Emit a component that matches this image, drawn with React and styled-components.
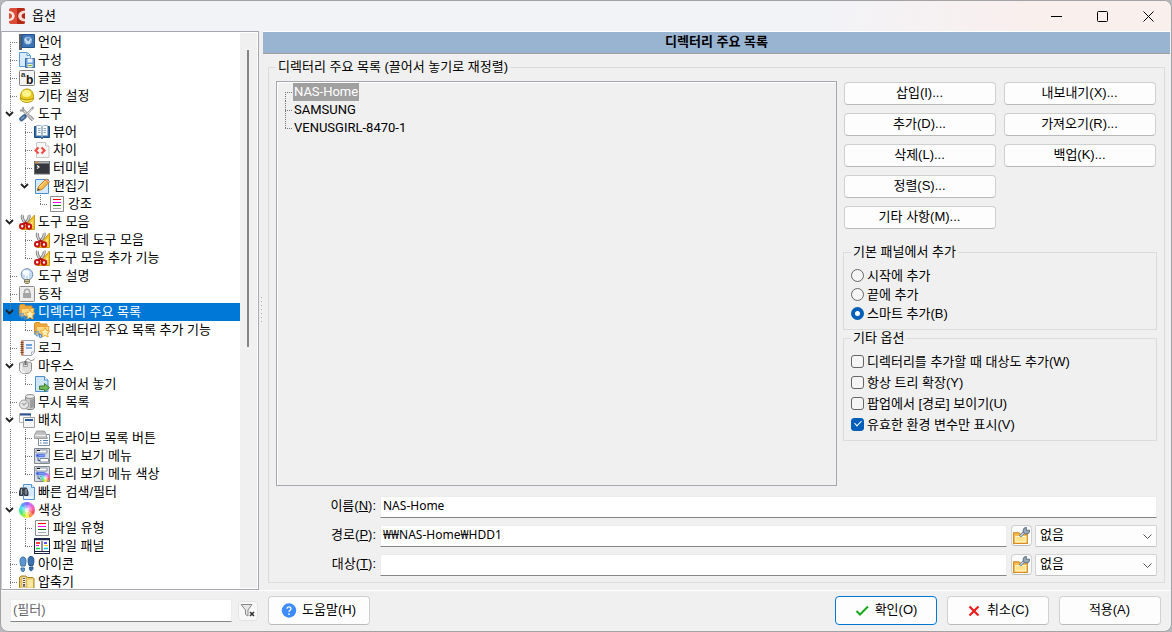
import React, { useState } from "react";
import styled, { createGlobalStyle, css } from "styled-components";

const uiFont = `"Liberation Sans", "Noto Sans CJK KR", sans-serif`;
const inputFont = `"Noto Sans", "Noto Sans CJK KR", sans-serif`;

const GlobalStyle = createGlobalStyle`
  *, *::before, *::after { box-sizing: border-box; }
  body {
    margin: 0;
    background: #b6b8bb;
    color: #000;
    font: 13px/18px ${uiFont};
  }
  button, input, select { font: inherit; color: inherit; margin: 0; }
`;

const Window = styled.div`
  display: flex;
  flex-direction: column;
  height: 100vh;
  background: #f0f0f0;
  border: 1px solid #a3a3a5;
  border-radius: 8px;
  overflow: hidden;
`;

const TitleBar = styled.header`
  display: flex;
  align-items: center;
  height: 30px;
  flex: none;
  padding-left: 8px;
  gap: 7px;
  background: linear-gradient(100deg, #f2f3f7 0 70%, #f9efed 88%);
`;

const Title = styled.h1`
  flex: 1;
  margin: 0;
  font-size: 13px;
  font-weight: 400;
`;

const WindowButtons = styled.div`
  display: flex;
`;

const WindowButton = styled.button`
  display: grid;
  place-items: center;
  width: 46px;
  height: 28px;
  padding: 0;
  border: 0;
  background: transparent;
`;

const Main = styled.div`
  display: flex;
  flex: 1;
  min-height: 0;
`;

const TreePanel = styled.nav`
  display: flex;
  flex: none;
  width: 258px;
  padding: 1px;
  border: 1px solid #a5a7b0;
  border-left-color: #d0d0d4;
  background: #fff;
`;

const Tree = styled.ul`
  flex: 1;
  min-width: 0;
  margin: 0;
  padding: 0;
  list-style: none;
  overflow: hidden;
`;

const ScrollTrack = styled.div`
  width: 17px;
  padding: 17px 8px 17px 7px;
  background: #f0f0f0;
`;

const ScrollThumb = styled.div`
  height: 57%;
  background: #858585;
`;

const TreeRow = styled.li`
  display: flex;
  align-items: center;
  height: 18px;
  white-space: nowrap;
  ${(p) => p.$selected && css`background: #0078d7; color: #fff;`}

  > svg { flex: none; margin: 0 3px 0 1px; }
`;

const dotsDown = "repeating-linear-gradient(to bottom, #777 0 1px, transparent 1px 2px)";
const dotsRight = "repeating-linear-gradient(to right, #777 0 1px, transparent 1px 2px)";

const Guide = styled.span`
  flex: none;
  display: flex;
  align-items: center;
  width: 15px;
  height: 18px;
  background-repeat: no-repeat;
  ${(p) => {
    const len = { full: "18px", half: "10px", none: "0" }[p.$down];
    return css`
      background-image: ${dotsDown}, ${dotsRight};
      background-position: 7px ${p.$first ? "9px" : "0"}, 7px 9px;
      background-size: 1px ${len}, ${p.$branch ? "8px" : "0"} 1px;
    `;
  }}
`;

const Toggle = styled.button`
  display: grid;
  place-items: center;
  width: 13px;
  height: 9px;
  padding: 0;
  border: 0;
  background: transparent;
  color: #222;
`;

const Splitter = styled.div`
  display: flex;
  align-items: center;
  justify-content: center;
  width: 4px;
  flex: none;

  &::after {
    content: "";
    width: 1px;
    height: 28px;
    background: repeating-linear-gradient(to bottom, #b0b0b0 0 1px, transparent 1px 4px);
  }
`;

const Content = styled.main`
  display: flex;
  flex-direction: column;
  flex: 1;
  min-width: 0;
`;

const PageHeading = styled.h2`
  margin: 0 1px 0 0;
  height: 23px;
  flex: none;
  border: solid #fff;
  border-width: 1px 0 0;
  box-shadow: inset 0 -1px #a0a0a0;
  background: #99b4d1;
  font-size: 13px;
  line-height: 20px;
  font-weight: 700;
  text-align: center;
`;

const GroupBox = styled.fieldset`
  min-width: 0;
  margin: 0;
  padding: ${(p) => p.$pad || "6px 7px"};
  border: 1px solid #dcdcdc;
`;

const Legend = styled.legend`
  padding: 0 2px;
  line-height: 16px;
`;

const HotlistGroup = styled(GroupBox)`
  display: flex;
  flex-direction: column;
  flex: 1;
  min-height: 0;
  gap: 10px;
  margin: 5px 6px 7px 5px;
`;

const Upper = styled.div`
  display: flex;
  flex: 1;
  min-height: 0;
  gap: 6px;
`;

const HotList = styled.ul`
  flex: 1;
  margin: 0;
  padding: 1px 1px 1px 2px;
  list-style: none;
  border: 1px solid #a5a7b0;
  box-shadow: inset 1px 1px #fff;
  font-family: Roboto, "Noto Sans CJK KR", sans-serif;
`;

const HotItem = styled.li`
  display: flex;
  height: 18px;
`;

const HotLabel = styled.span`
  padding: 0 1px;
  ${(p) => p.$selected && css`background: #a0a0a0; color: #fff;`}
`;

const HotGuide = styled(Guide)`
  width: 14px;
  background-position: 6px ${(p) => (p.$first ? "9px" : "0")}, 6px 9px;
`;

const Side = styled.div`
  flex: none;
  width: 314px;
`;

const ButtonGrid = styled.div`
  display: grid;
  grid-auto-flow: column;
  grid-template-rows: repeat(5, 23px);
  grid-auto-columns: 1fr;
  gap: 8px;
  padding: 1px 1px 15px;
`;

const Button = styled.button`
  display: flex;
  align-items: center;
  justify-content: center;
  gap: 5px;
  padding: 0 1px 2px 0;
  border: 1px solid ${(p) => (p.$primary ? "#0078d4" : "#d0d0d0")};
  border-bottom-color: ${(p) => (p.$primary ? "#0078d4" : "#bababa")};
  border-radius: 4px;
  background: #fdfdfd;
  line-height: 18px;
`;

const FooterButton = styled(Button)`
  width: 102px;
  height: 29px;
`;

const Choice = styled.label`
  display: flex;
  align-items: center;
  gap: 3px;
  height: ${(p) => (p.$tall ? 21 : 19)}px;
`;

const Radio = styled.input.attrs({ type: "radio" })`
  appearance: none;
  width: 13px;
  height: 13px;
  border: 1px solid #666;
  border-radius: 50%;
  background: #f5f5f5;
  &:checked { border: 4px solid #005fb8; background: #fff; }
`;

const Checkbox = styled.input.attrs({ type: "checkbox" })`
  appearance: none;
  display: grid;
  justify-items: center;
  width: 13px;
  height: 13px;
  border: 1px solid #666;
  border-radius: 3px;
  background: #f5f5f5;
  &:checked { border-color: #005fb8; background: #005fb8; }
  &:checked::before {
    content: "";
    width: 4px;
    height: 7px;
    border: solid #fff;
    border-width: 0 1px 1px 0;
    transform: rotate(45deg);
  }
`;

const Form = styled.div`
  display: grid;
  gap: 7px;
`;

const FormRow = styled.div`
  display: flex;
  height: 22px;
`;

const FieldLabel = styled.label`
  width: 104px;
  flex: none;
  padding-right: 4px;
  text-align: right;
  line-height: 19px;
`;

const TextInput = styled.input.attrs({ type: "text" })`
  flex: 1;
  min-width: 0;
  padding: 0 2px 2px;
  border: 1px solid #ececec;
  border-bottom-color: #868686;
  border-radius: 0;
  background: #fff;
  font: 12px/18px ${inputFont};
  outline: none;
`;

const FilterInput = styled(TextInput)`
  flex: none;
  width: 222px;
  height: 23px;
  font: 13px/18px ${uiFont};
  &::placeholder { color: #666; opacity: 1; }
`;

const IconButton = styled(Button)`
  width: 21px;
  height: 21px;
  margin: 0 3px 0 4px;
  padding: 0;
`;

const FilterButton = styled(Button)`
  width: 20px;
  height: 20px;
  padding: 0;
  border-color: #e4e4e4;
  background: #f8f8f8;
`;

const SelectBox = styled.div`
  display: grid;
  grid-template-columns: 1fr 14px;
  align-items: center;
  width: 122px;
  > select { grid-area: 1 / 1 / 2 / 3; }
  > svg { grid-area: 1 / 2 / 2 / 3; pointer-events: none; z-index: 1; }
`;

const Select = styled.select`
  appearance: none;
  width: 100%;
  height: 22px;
  padding: 0 4px 2px;
  border: 1px solid #d4d4d4;
  border-bottom-color: #c2c2c2;
  border-radius: 2px;
  background: #fdfdfd;
`;

const Footer = styled.footer`
  display: flex;
  align-items: flex-start;
  gap: 10px;
  flex: none;
  padding: 5px 10px 6px 9px;
  border-top: 1px solid #fff;
`;

const FilterArea = styled.div`
  display: flex;
  align-items: center;
  gap: 6px;
  width: 248px;
  height: 29px;
`;

const Spacer = styled.div`
  flex: 1;
`;

const Svg = ({ size = 16, children }) => (
  <svg width={size} height={size} viewBox="0 0 16 16" fill="none" aria-hidden="true">
    {children}
  </svg>
);

const Scissors = () => (
  <Svg>
    <path d="M15.500 1v14.500H3z" fill="#f0c52a" stroke="#c99a12" />
    <path d="M13.500 6v7.500H9z" fill="#fff0a0" />
    <path d="M3.500 1c-1 3 1 6 3 8.500M10 1c1 3-1.500 6-4 8.500" stroke="#777" strokeWidth="3" />
    <path d="M3.500 1c-1 3 1 6 3 8.500M10 1c1 3-1.500 6-4 8.500" stroke="#d6d6d6" strokeWidth="1.400" />
    <path d="M4.500 10.500l2-1.800 2.500 1.800" stroke="#b51010" strokeWidth="2.200" />
    <ellipse cx="3.200" cy="12.200" rx="2.200" ry="2.300" fill="#fff" stroke="#c81414" strokeWidth="2" />
    <ellipse cx="10" cy="12.500" rx="2.200" ry="2.300" fill="#fff" stroke="#c81414" strokeWidth="2" />
  </Svg>
);

const StarFolder = () => (
  <Svg>
    <path d="M.5 1.500l1-1h4l1 1.500H13v9H.5z" fill="#f0a93c" stroke="#d98d24" />
    <path d="M2.500 4.500h12.500l-1 7.500H2z" fill="#ffd983" stroke="#e8a43c" />
    <path d="M11 5.500l1.600 3 3.200.5-2.300 2.300.6 3.700-3.100-1.600-3.100 1.600.6-3.700L6.200 9l3.200-.5z" fill="#fff0b8" stroke="#efa62c" />
    <circle cx="3" cy="11.500" r="2" stroke="#5b96c8" strokeWidth="1.800" strokeDasharray="1.600 .6" />
    <circle cx="6.500" cy="14" r="1.300" stroke="#4f8cc2" strokeWidth="1.200" />
  </Svg>
);

const ColorLines = () => (
  <Svg>
    <path d="M1.500 .5h13v15h-13z" fill="#fff" stroke="#8c8c8c" />
    <path d="M4 3.500h8" stroke="#f00" />
    <path d="M4 6.500h8" stroke="#f0f" />
    <path d="M4 9.500h8" stroke="#008000" />
    <path d="M4 12.500h8" stroke="#aaa" />
  </Svg>
);

const MenuTree = ({ children }) => (
  <Svg>
    <path d="M.5 .5h15v15H.5z" fill="#d9dfe6" stroke="#83888e" />
    <path d="M2 2h11v3H2z" fill="#fff" stroke="#8a94a4" />
    <path d="M3 2.500h3" stroke="#111" />
    <path d="M2 6h9v3H2z" fill="#2449d6" stroke="#9eb2ee" />
    <path d="M4.500 7.500h6" stroke="#7f9bff" />
    <path d="M6 10.500h8.500v3.500H6z" fill="#fff" stroke="#7e8ca0" />
    <path d="M4 9.500v3h2" stroke="#4b5f8c" />
    {children}
  </Svg>
);

const Wheel = ({ cx = 8, cy = 8, r = 8 }) => {
  const colors = ["#f9565e", "#fb9a4c", "#f7ee50", "#8fee4a", "#45e68e", "#4de0e6", "#5c9bfa", "#8f6cf6", "#d765ee", "#f95fb4"];
  const step = (Math.PI * 2) / colors.length;
  return (
    <>
      {colors.map((c, i) => {
        const a = i * step;
        const b = (i + 1.080) * step;
        const p = (t) => `${(cx + r * Math.cos(t)).toFixed(2)} ${(cy + r * Math.sin(t)).toFixed(2)}`;
        return <path key={c} d={`M${cx} ${cy}L${p(a)}A${r} ${r} 0 0 1 ${p(b)}z`} fill={c} />;
      })}
      <circle cx={cx} cy={cy} r={r * 0.6} fill="#fff" opacity=".35" />
      <circle cx={cx} cy={cy} r={r * 0.3} fill="#fff" opacity=".6" />
    </>
  );
};

const ICONS = {
  flag: () => (
    <Svg>
      <path d="M1.500 0v16" stroke="#56616c" strokeWidth="3" />
      <path d="M3 .5h12.500v13H3z" fill="#3a74b4" stroke="#24528c" />
      <circle cx="9" cy="6.500" r="4" fill="#8db2da" />
      <path d="M6 4.500c1 4 4 4.500 6 .5M7 8.500c1.500 1 3 1 4-.5" stroke="#d2e2f2" strokeWidth="1.200" />
      <path d="M8 4.500h2.500l-1 3z" fill="#3f78b6" />
    </Svg>
  ),
  config: () => (
    <Svg>
      <path d="M.5 .5h8l3 3v11H.5z" fill="#d7ebfc" stroke="#5c9bd8" />
      <path d="M8 .5v3h3" fill="#fff" stroke="#5c9bd8" />
      <path d="M6.500 6.500h9v9h-9z" fill="#6f9ed8" stroke="#3866aa" />
      <path d="M8.500 6.500h5v4h-5z" fill="#eaf2fb" />
      <path d="M8.500 12h5v3.500h-5z" fill="#e7f2cd" />
      <path d="M9 13.500h4" stroke="#86b843" />
    </Svg>
  ),
  font: () => (
    <Svg>
      <rect x=".5" y=".5" width="15" height="15" rx="1" fill="#f4f4f4" stroke="#808080" />
      <text x="2" y="7" fontFamily="Liberation Sans" fontWeight="700" fontSize="8" fill="#333">a</text>
      <text x="7" y="14" fontFamily="Liberation Sans" fontWeight="700" fontSize="12" fill="#111">b</text>
    </Svg>
  ),
  helmet: () => (
    <Svg>
      <path d="M1.500 11C1 4 4 1 8 1s7 3 6.500 10c-1 4.500-12 4.500-13 0z" fill="#e8cb1e" stroke="#b79a0a" />
      <ellipse cx="7.500" cy="5.500" rx="4.500" ry="3.500" fill="#fff48c" />
      <path d="M2 10.500c4 1.800 8 1.800 12 0" stroke="#b0920a" />
      <path d="M2.500 12c4 1.600 7 1.600 11 0" stroke="#fff07a" />
    </Svg>
  ),
  tools: () => (
    <Svg>
      <path d="M3 3l8 8" stroke="#878787" strokeWidth="2.600" />
      <path d="M3 3l8 8" stroke="#dcdcdc" strokeWidth="1.200" />
      <path d="M1 4.500C4 5 5 4 4 1" stroke="#9a9a9a" strokeWidth="1.800" />
      <path d="M10.500 10.500l3.500 3.500" stroke="#8b8b8b" strokeWidth="3.600" />
      <path d="M10.500 10.500l3.500 3.500" stroke="#d8d8d8" strokeWidth="1.600" />
      <path d="M14.500 1L7 9" stroke="#a0a0a0" strokeWidth="2" />
      <path d="M13 3L7 9" stroke="#efefef" strokeWidth=".8" />
      <path d="M5.500 10.500L2.500 13" stroke="#3e6290" strokeWidth="4.500" strokeLinecap="round" />
      <path d="M5 10.800l-2.500 2" stroke="#7ca1cb" strokeWidth="1.500" strokeLinecap="round" />
    </Svg>
  ),
  book: () => (
    <Svg>
      <path d="M.5 2.500h15v11h-6l-1.500 1-1.500-1h-6z" fill="#2c6aa4" stroke="#1c4f84" />
      <path d="M2.500 1.500h4L8 2.500l1.500-1h4v10h-4l-1.500 1-1.500-1h-4z" fill="#fafcfe" stroke="#9db6ce" />
      <path d="M8 3v9" stroke="#5d7fa3" />
      <path d="M4 4.500h2.500M4 6.500h2.500M4 8.500h2.500M9.500 4.500H12M9.500 6.500H12M9.500 8.500H12" stroke="#93a9bf" />
    </Svg>
  ),
  diff: () => (
    <Svg>
      <path d="M2.500 .5h9l3.500 3.500v11.500H2.500z" fill="#f6f6f6" stroke="#c6c6c6" />
      <path d="M11.500 .5v3.500H15" fill="#fff" stroke="#c6c6c6" />
      <path d="M4.500 5.500L1.500 8.500l3 3M7.500 5.500l3 3-3 3" stroke="#ee4d47" strokeWidth="2.200" />
    </Svg>
  ),
  terminal: () => (
    <Svg>
      <rect x=".5" y="1.500" width="15" height="12.500" fill="#34373b" stroke="#6a6d70" />
      <path d="M1 2.500h14" stroke="#aeb2b6" strokeWidth="2" />
      <path d="M1.500 2.500h3" stroke="#db8d32" strokeWidth="1.500" />
      <path d="M3 5.500l2 1.500-2 1.500" stroke="#fff" strokeWidth="1.200" />
    </Svg>
  ),
  editor: () => (
    <Svg>
      <path d="M1.500 1.500h13v14h-13z" fill="#d5eafb" stroke="#4b8ed1" />
      <path d="M3.500 12.500l1-4L11.500 1.500l3.500 3L8 11.500z" fill="#f5bb4b" stroke="#c37b1c" />
      <path d="M11 2l3.500 3 1-1.500-3-2.500z" fill="#efb1a0" stroke="#c37b1c" strokeWidth=".6" />
      <path d="M5.500 9l6-6" stroke="#ffe7a5" />
      <path d="M3.200 12.800l.7-2.500L6 12z" fill="#444" />
    </Svg>
  ),
  lines: ColorLines,
  scissors: Scissors,
  bulb: () => (
    <Svg>
      <circle cx="8" cy="6.500" r="5.800" fill="#c3daf1" stroke="#6d8cae" />
      <ellipse cx="7" cy="4.500" rx="3.500" ry="2.500" fill="#f7fbff" />
      <path d="M6.500 11V7l1.500 1 1.500-1v4" stroke="#f4f9ff" />
      <path d="M5.500 11.500h5v3l-1 1h-3l-1-1z" fill="#d3c896" stroke="#7e7a68" />
      <path d="M6 13.500h4" stroke="#8a846b" />
    </Svg>
  ),
  lock: () => (
    <Svg>
      <rect x=".5" y=".5" width="15" height="15" rx="1" fill="#ededed" stroke="#8b8b8b" />
      <path d="M5.500 8V5.500c0-3 5-3 5 0V8" stroke="#a9a9a9" strokeWidth="1.500" />
      <rect x="4" y="7" width="8" height="5" fill="#a5a5a5" />
    </Svg>
  ),
  starFolder: StarFolder,
  log: () => (
    <Svg>
      <path d="M3.500 .5h12v12l-3 3h-9z" fill="#f3f6fa" stroke="#9ba5b0" />
      <path d="M2 .5h2.500v15H2z" fill="#cb7f50" />
      <path d="M1.500 2.500h3M1.500 4.500h3M1.500 6.500h3M1.500 8.500h3M1.500 10.500h3M1.500 12.500h3" stroke="#7e4526" />
      <path d="M7 5h6" stroke="#6b9fe0" strokeWidth="2" />
      <path d="M7 8h6" stroke="#6b9fe0" strokeWidth="1.500" />
      <path d="M12.500 15v-3h3" fill="#fff" stroke="#aab4bf" />
    </Svg>
  ),
  mouse: () => (
    <Svg>
      <path d="M6.500 4c0-3.500 3-4 4-2.200s3.500.5 5-.8" stroke="#777" />
      <path d="M.5 5c2-1.500 10-1.500 12 0v6.500c0 5.500-12 5.500-12 0z" fill="#dedede" stroke="#8c8c8c" />
      <path d="M2 7v4c0 3 3 3.500 4 3.500" stroke="#f8f8f8" strokeWidth="1.500" />
      <path d="M4.500 4.500v4h4v-4" stroke="#a0a0a0" />
      <rect x="5.500" y="3" width="2" height="4" fill="#666" />
    </Svg>
  ),
  drag: () => (
    <Svg>
      <path d="M1.500 .5h9l3.500 3.500v11.500H1.500z" fill="#cfe6fa" stroke="#4d8fd3" />
      <path d="M10.500 .5v3.500H14" fill="#fff" stroke="#4d8fd3" />
      <path d="M5.500 10h5V7.500l5 4.200-5 4v-2.200h-5z" fill="#6fba58" stroke="#3f7d30" />
    </Svg>
  ),
  trash: () => (
    <Svg>
      <path d="M6.500 2.500h9v11.500l-2 1.500h-5l-2-1.500z" fill="#c8c8c8" stroke="#858585" />
      <ellipse cx="11" cy="2.500" rx="4.500" ry="2" fill="#eee" stroke="#8b8b8b" />
      <path d="M12 5.500v8.500M14 5v8.500" stroke="#777" />
      <circle cx="5" cy="10.500" r="4.500" fill="#e5e5e5" stroke="#9a9a9a" />
      <path d="M3 9l2 2 2.500-2.500" stroke="#aaa" strokeWidth="1.400" />
    </Svg>
  ),
  layout: () => (
    <Svg>
      <path d="M.5 1.500h11v9H.5z" fill="#f8f8f8" stroke="#b4b4b4" />
      <path d="M1 2.500h11" stroke="#2a5592" strokeWidth="2" />
      <path d="M4.500 5.500h11v10h-11z" fill="#f5f5f5" stroke="#a0a0a0" />
      <path d="M6 8h8" stroke="#2a5592" strokeWidth="2" />
    </Svg>
  ),
  drive: () => (
    <Svg>
      <path d="M4.500 4.500h11v11h-11z" fill="#fff" stroke="#7f8da0" />
      <path d="M9 8h5M9 10.500h5M9 13h5M6 10.500h1.500M6 13h1.500" stroke="#5578b0" />
      <path d="M2.500 1h8l2 4v3.500h-12V5z" fill="#bdbdbd" stroke="#a0a0a0" />
      <path d="M1 5.500h11" stroke="#e8e8e8" strokeWidth="1.500" />
    </Svg>
  ),
  menuTree: () => <MenuTree />,
  menuColor: () => (
    <MenuTree>
      <Wheel cx={11.500} cy={11.500} r={4.500} />
    </MenuTree>
  ),
  search: () => (
    <Svg>
      <path d="M4.500 .5h8l3 3v12h-11z" fill="#d4e9fb" stroke="#5595d5" />
      <path d="M12.500 .5v3h3" fill="#fff" stroke="#5595d5" />
      <path d="M1.500 4h2.500v2.500h1V4h2.500l1.500 4v3.500H5.500V9.500h-1.500v2H.5V8z" fill="#4b535c" stroke="#30363d" />
      <path d="M2.500 5v5.500M7 5v5.500" stroke="#a8b4c0" />
      <path d="M5 13.500h9" stroke="#f4faff" strokeWidth="2" />
    </Svg>
  ),
  wheel: () => (
    <Svg>
      <Wheel />
    </Svg>
  ),
  panels: () => (
    <Svg>
      <rect x=".5" y=".5" width="15" height="15" fill="#fff" stroke="#1d2547" />
      <path d="M0 1.500h16M8 1v12M0 13.500h16" stroke="#1d2547" />
      <path d="M1 2.500h14" stroke="#c6cbdc" />
      <path d="M2 5h4" stroke="#f00" strokeWidth="1.500" />
      <path d="M2 7.500h3" stroke="#e0e" />
      <path d="M2 10.500h4" stroke="#0d3" strokeWidth="1.500" />
      <path d="M10 5h3" stroke="#22f" strokeWidth="1.500" />
      <path d="M10 7.500h4" stroke="#fc0" />
      <path d="M10 10.500h4" stroke="#0cd" strokeWidth="1.500" />
    </Svg>
  ),
  feet: () => (
    <Svg>
      <path d="M4 1C.5 1 .5 5.500 2 10h4C7.500 6 7.500 1 4 1z" fill="#5a96cf" stroke="#38709f" />
      <path d="M2 12h3.500c1 5-4 5-3.500 0z" fill="#5a96cf" stroke="#38709f" />
      <path d="M12 .5c-3.500 0-3.500 4.500-2 9h4c1.500-4.500 1.500-9-2-9z" fill="#3a70ac" stroke="#24558c" />
      <path d="M10.500 11H14c.5 5-4.500 5-3.500 0z" fill="#3a70ac" stroke="#24558c" />
    </Svg>
  ),
  zip: () => (
    <Svg>
      <path d="M.5 3.500L2 2h5l1.500 1.500H14l1 1v10H1.500l-1-1z" fill="#ecc964" stroke="#a8831f" />
      <path d="M8.500 5.500h5.500v8H8.500z" fill="#fae7a4" />
      <rect x="3" y="3" width="4" height="11" fill="#fbf3d5" stroke="#b39a50" strokeWidth=".5" />
      <path d="M5 4v7" stroke="#555" strokeWidth="2" strokeDasharray="1 1" />
      <rect x="4" y="11" width="2" height="2" fill="#777" />
    </Svg>
  ),
};

const AppIcon = () => (
  <Svg>
    <rect width="16" height="16" rx="2" fill="#dd4a36" />
    <path d="M8 0h6a2 2 0 0 1 2 2v12a2 2 0 0 1-2 2H8z" fill="#b52918" />
    <path d="M0 3C7.500 3 7.500 13 0 13v-2c4-.5 4-5.500 0-6z" fill="#fbe9e4" />
    <path d="M16 2.500C7 3 7 13 16 13.500V11c-4.500-.5-4.500-5.500 0-6z" fill="#f6dcd6" />
  </Svg>
);

const BrowseIcon = () => (
  <Svg size={17}>
    <path d="M.5 5.500h5l1 1h7v9H.5z" fill="#f6bd4c" stroke="#d98b22" />
    <path d="M2.500 9h9.500v5H2.500z" fill="#ffe389" stroke="#fff4cc" />
    <path d="M6.500 9l4.500-4.500" stroke="#6e8298" strokeWidth="2.800" />
    <path d="M7 8.500l4-4" stroke="#c9d6e3" strokeWidth="1.200" />
    <path d="M15.500 3a3 3 0 1 1-3-2.500v2.500z" fill="#9caab8" stroke="#66788b" />
  </Svg>
);

const FunnelIcon = () => (
  <Svg>
    <path d="M1 1.500h11L8 7v6l-2.500-1.500V7z" fill="#e5e5e5" stroke="#8a8a8a" />
    <path d="M10 9l4 4M14 9l-4 4" stroke="#333" strokeWidth="1.600" />
  </Svg>
);

const HelpIcon = () => (
  <Svg>
    <circle cx="8" cy="8.500" r="7.200" fill="#3d8bfd" />
    <path d="M6 6.800c0-2.600 4-2.600 4 0 0 1.600-2 1.500-2 3.200" stroke="#fff" strokeWidth="1.300" />
    <circle cx="8" cy="12.100" r=".9" fill="#fff" />
  </Svg>
);

const CheckIcon = () => (
  <Svg>
    <path d="M2.500 9l3.500 3.500 8-8" stroke="#17a81a" strokeWidth="2" />
  </Svg>
);

const CrossIcon = () => (
  <Svg>
    <path d="M3.500 4.500l9 9M12.500 4.500l-9 9" stroke="#ee1c1c" strokeWidth="2.200" />
  </Svg>
);

const Caret = () => (
  <svg width="9" height="5" viewBox="0 0 9 5" fill="none" aria-hidden="true">
    <path d="M.5 .5l4 4 4-4" stroke="#555" />
  </svg>
);

const ToggleMark = () => (
  <svg width="9" height="6" viewBox="0 0 9 6" fill="none" aria-hidden="true">
    <path d="M1 1l3.500 3.500L8 1" stroke="currentColor" strokeWidth="1.800" />
  </svg>
);

/* [label, icon, level, expandable, last child of its parent] */
const TREE = [
  ["언어", "flag", 0],
  ["구성", "config", 0],
  ["글꼴", "font", 0],
  ["기타 설정", "helmet", 0],
  ["도구", "tools", 0, true],
  ["뷰어", "book", 1],
  ["차이", "diff", 1],
  ["터미널", "terminal", 1],
  ["편집기", "editor", 1, true, true],
  ["강조", "lines", 2, false, true],
  ["도구 모음", "scissors", 0, true],
  ["가운데 도구 모음", "scissors", 1],
  ["도구 모음 추가 기능", "scissors", 1, false, true],
  ["도구 설명", "bulb", 0],
  ["동작", "lock", 0],
  ["디렉터리 주요 목록", "starFolder", 0, true],
  ["디렉터리 주요 목록 추가 기능", "starFolder", 1, false, true],
  ["로그", "log", 0],
  ["마우스", "mouse", 0, true],
  ["끌어서 놓기", "drag", 1, false, true],
  ["무시 목록", "trash", 0],
  ["배치", "layout", 0, true],
  ["드라이브 목록 버튼", "drive", 1],
  ["트리 보기 메뉴", "menuTree", 1],
  ["트리 보기 메뉴 색상", "menuColor", 1, false, true],
  ["빠른 검색/필터", "search", 0],
  ["색상", "wheel", 0, true],
  ["파일 유형", "lines", 1],
  ["파일 패널", "panels", 1, false, true],
  ["아이콘", "feet", 0],
  ["압축기", "zip", 0],
];

const HOTLIST = ["NAS-Home", "SAMSUNG", "VENUSGIRL-8470-1"];
const ACTIONS = ["삽입(I)...", "추가(D)...", "삭제(L)...", "정렬(S)...", "기타 사항(M)...", "내보내기(X)...", "가져오기(R)...", "백업(K)..."];
const ADD_MODES = ["시작에 추가", "끝에 추가", "스마트 추가(B)"];
const OPTIONS = [
  ["디렉터리를 추가할 때 대상도 추가(W)", false],
  ["항상 트리 확장(Y)", false],
  ["팝업에서 [경로] 보이기(U)", false],
  ["유효한 환경 변수만 표시(V)", true],
];

function TreeItem({ item, first, selected, onSelect }) {
  const [label, icon, level, expandable, last] = item;
  const Icon = ICONS[icon];
  return (
    <TreeRow
      role="treeitem"
      aria-level={level + 1}
      aria-selected={selected}
      aria-expanded={expandable ? true : undefined}
      $selected={selected}
      onClick={onSelect}
    >
      {Array.from({ length: level }, (_, i) => (
        <Guide key={i} $down={i === 0 ? "full" : "none"} />
      ))}
      <Guide $first={first} $down={expandable || last ? "half" : "full"} $branch={!expandable}>
        {expandable && (
          <Toggle aria-label={`${label} 접기`}>
            <ToggleMark />
          </Toggle>
        )}
      </Guide>
      <Icon />
      {label}
    </TreeRow>
  );
}

function PathRow({ id, label, hotkey, value }) {
  return (
    <FormRow>
      <FieldLabel htmlFor={id}>
        {label}(<u>{hotkey}</u>):
      </FieldLabel>
      <TextInput id={id} defaultValue={value} />
      <IconButton aria-label="찾아보기">
        <BrowseIcon />
      </IconButton>
      <SelectBox>
        <Select aria-label={`${label} 정렬`}>
          <option>없음</option>
        </Select>
        <Caret />
      </SelectBox>
    </FormRow>
  );
}

export default function App() {
  const [page, setPage] = useState("디렉터리 주요 목록");
  return (
    <Window>
      <GlobalStyle />
      <TitleBar>
        <AppIcon />
        <Title>옵션</Title>
        <WindowButtons>
          <WindowButton aria-label="최소화">
            <svg width="11" height="11" fill="none"><path d="M0 5.500h11" stroke="#000" /></svg>
          </WindowButton>
          <WindowButton aria-label="최대화">
            <svg width="11" height="11" fill="none"><rect x=".5" y=".5" width="10" height="10" rx="1" stroke="#000" /></svg>
          </WindowButton>
          <WindowButton aria-label="닫기">
            <svg width="11" height="11" fill="none"><path d="M.5 .5l10 10M10.500 .5l-10 10" stroke="#000" /></svg>
          </WindowButton>
        </WindowButtons>
      </TitleBar>

      <Main>
        <TreePanel aria-label="옵션 분류">
          <Tree role="tree">
            {TREE.map((item, i) => (
              <TreeItem
                key={item[0]}
                item={item}
                first={i === 0}
                selected={item[0] === page}
                onSelect={() => setPage(item[0])}
              />
            ))}
          </Tree>
          <ScrollTrack>
            <ScrollThumb />
          </ScrollTrack>
        </TreePanel>
        <Splitter />

        <Content>
          <PageHeading>디렉터리 주요 목록</PageHeading>
          <HotlistGroup>
            <Legend>디렉터리 주요 목록 (끌어서 놓기로 재정렬)</Legend>
            <Upper>
              <HotList>
                {HOTLIST.map((name, i) => (
                  <HotItem key={name}>
                    <HotGuide $down={i === HOTLIST.length - 1 ? "half" : "full"} $first={i === 0} $branch />
                    <HotLabel $selected={i === 0}>{name}</HotLabel>
                  </HotItem>
                ))}
              </HotList>
              <Side>
                <ButtonGrid>
                  {ACTIONS.map((a) => (
                    <Button key={a}>{a}</Button>
                  ))}
                </ButtonGrid>
                <GroupBox>
                  <Legend>기본 패널에서 추가</Legend>
                  {ADD_MODES.map((mode, i) => (
                    <Choice key={mode}>
                      <Radio name="add-mode" defaultChecked={i === 2} />
                      {mode}
                    </Choice>
                  ))}
                </GroupBox>
                <GroupBox $pad="5px 7px">
                  <Legend>기타 옵션</Legend>
                  {OPTIONS.map(([text, on]) => (
                    <Choice key={text} $tall>
                      <Checkbox defaultChecked={on} />
                      {text}
                    </Choice>
                  ))}
                </GroupBox>
              </Side>
            </Upper>
            <Form>
              <FormRow>
                <FieldLabel htmlFor="name">
                  이름(<u>N</u>):
                </FieldLabel>
                <TextInput id="name" defaultValue="NAS-Home" />
              </FormRow>
              <PathRow id="path" label="경로" hotkey="P" value="₩₩NAS-Home₩HDD1" />
              <PathRow id="target" label="대상" hotkey="T" value="" />
            </Form>
          </HotlistGroup>
        </Content>
      </Main>

      <Footer>
        <FilterArea>
          <FilterInput placeholder="(필터)" aria-label="필터" />
          <FilterButton aria-label="필터 지우기">
            <FunnelIcon />
          </FilterButton>
        </FilterArea>
        <FooterButton>
          <HelpIcon />
          도움말(H)
        </FooterButton>
        <Spacer />
        <FooterButton $primary>
          <CheckIcon />
          확인(O)
        </FooterButton>
        <FooterButton>
          <CrossIcon />
          취소(C)
        </FooterButton>
        <FooterButton>적용(A)</FooterButton>
      </Footer>
    </Window>
  );
}
